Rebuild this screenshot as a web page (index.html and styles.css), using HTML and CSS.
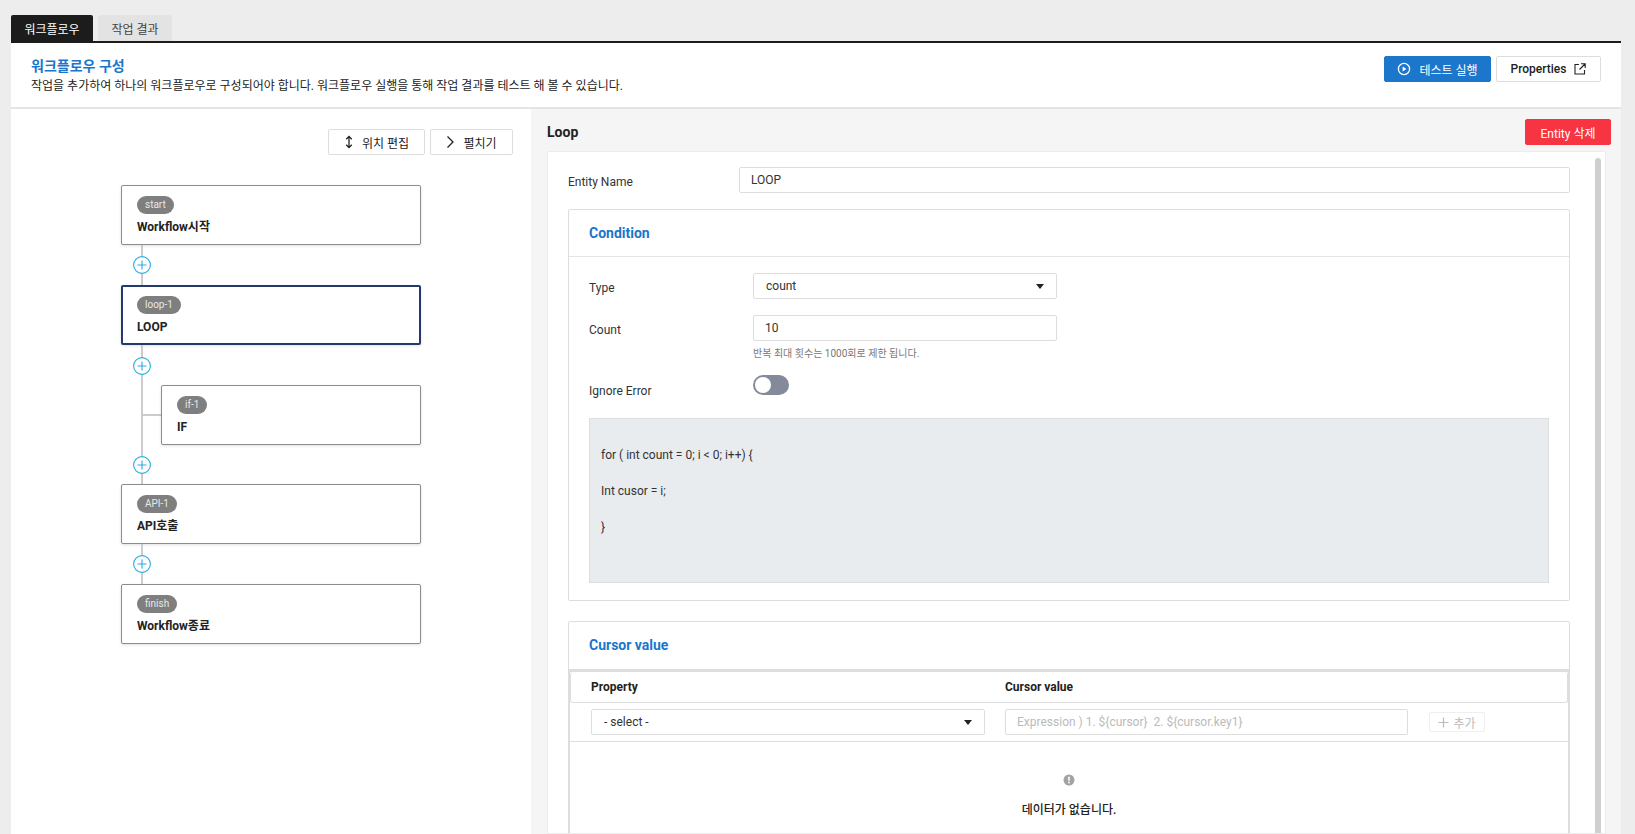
FILE: index.html
```html
<!DOCTYPE html>
<html lang="ko">
<head>
<meta charset="utf-8">
<title>워크플로우</title>
<link rel="stylesheet" href="styles.css">
</head>
<body>
<div class="page">
  <nav class="tabs">
    <div class="tab tab-active">워크플로우</div>
    <div class="tab">작업 결과</div>
  </nav>
  <main class="panel">
    <header class="panel-head">
      <div class="head-text">
        <h1 class="head-title">워크플로우 구성</h1>
        <p class="head-desc">작업을 추가하여 하나의 워크플로우로 구성되어야 합니다. 워크플로우 실행을 통해 작업 결과를 테스트 해 볼 수 있습니다.</p>
      </div>
      <div class="head-actions">
        <button class="btn btn-primary">
          <svg class="icon" width="14" height="14" viewBox="0 0 14 14"><circle cx="7" cy="7" r="5.6" fill="none" stroke="#fff" stroke-width="1.3"/><path d="M5.6 4.6 9.4 7 5.6 9.4Z" fill="#fff"/></svg>
          <span>테스트 실행</span>
        </button>
        <button class="btn btn-props">
          <span>Properties</span>
          <svg class="icon" width="12" height="12" viewBox="0 0 12 12"><path d="M5 1.5H1V11H10.5V7M7 .8H11.2V5M11 1 5.5 6.5" fill="none" stroke="#222" stroke-width="1.1"/></svg>
        </button>
      </div>
    </header>
    <div class="split">
      <section class="left">
        <div class="left-tools">
          <button class="btn btn-tool btn-edit">
            <svg class="icon" width="10" height="14" viewBox="0 0 10 14"><path d="M5 1.5V12.5M2.2 4.2 5 1.4 7.800 4.200M2.200 9.800 5 12.600 7.800 9.800" fill="none" stroke="#222" stroke-width="1.300"/></svg>
            <span>위치 편집</span>
          </button>
          <button class="btn btn-tool btn-open">
            <svg class="icon" width="9" height="14" viewBox="0 0 9 14"><path d="M1.500 1.500 7 7 1.500 12.500" fill="none" stroke="#222" stroke-width="1.300"/></svg>
            <span>펼치기</span>
          </button>
        </div>
        <div class="flow">
          <div class="node"><span class="badge">start</span><strong class="node-name">Workflow시작</strong></div>
          <div class="connector"><svg class="plus" width="18" height="18" viewBox="0 0 18 18"><circle cx="9" cy="9" r="8.400" fill="#fff" stroke="#29abe2" stroke-width="1.100"/><path d="M9 4.500V13.500M4.500 9H13.500" stroke="#29abe2" stroke-width="1.100"/></svg></div>
          <div class="node node-selected"><span class="badge">loop-1</span><strong class="node-name">LOOP</strong></div>
          <div class="connector connector-low"><svg class="plus" width="18" height="18" viewBox="0 0 18 18"><circle cx="9" cy="9" r="8.400" fill="#fff" stroke="#29abe2" stroke-width="1.100"/><path d="M9 4.500V13.500M4.500 9H13.500" stroke="#29abe2" stroke-width="1.100"/></svg></div>
          <div class="branch">
            <div class="node node-child"><span class="badge">if-1</span><strong class="node-name">IF</strong></div>
          </div>
          <div class="connector connector-short"><svg class="plus" width="18" height="18" viewBox="0 0 18 18"><circle cx="9" cy="9" r="8.400" fill="#fff" stroke="#29abe2" stroke-width="1.100"/><path d="M9 4.500V13.500M4.500 9H13.500" stroke="#29abe2" stroke-width="1.100"/></svg></div>
          <div class="node"><span class="badge">API-1</span><strong class="node-name">API호출</strong></div>
          <div class="connector"><svg class="plus" width="18" height="18" viewBox="0 0 18 18"><circle cx="9" cy="9" r="8.400" fill="#fff" stroke="#29abe2" stroke-width="1.100"/><path d="M9 4.500V13.500M4.500 9H13.500" stroke="#29abe2" stroke-width="1.100"/></svg></div>
          <div class="node"><span class="badge">finish</span><strong class="node-name">Workflow종료</strong></div>
        </div>
      </section>
      <section class="right">
        <div class="right-head">
          <h2 class="right-title">Loop</h2>
          <button class="btn btn-danger">Entity 삭제</button>
        </div>
        <div class="card">
          <div class="card-body">
            <div class="entity-row">
              <label class="label entity-label">Entity Name</label>
              <div class="field entity-field">LOOP</div>
            </div>
            <section class="box box-condition">
              <h3 class="box-title">Condition</h3>
              <div class="box-body">
                <div class="row">
                  <label class="label row-label">Type</label>
                  <div class="field field-select field-wide"><span>count</span><i class="caret"></i></div>
                </div>
                <div class="row row-count">
                  <label class="label row-label">Count</label>
                  <div class="field field-wide">10</div>
                </div>
                <p class="help">반복 최대 횟수는 1000회로 제한 됩니다.</p>
                <div class="row row-toggle">
                  <label class="label row-label">Ignore Error</label>
                  <div class="toggle"><i class="knob"></i></div>
                </div>
                <div class="code">
                  <p class="code-line">for ( int count = 0; i &lt; 0; i++) {</p>
                  <p class="code-line">Int cusor = i;</p>
                  <p class="code-line">}</p>
                </div>
              </div>
            </section>
            <section class="box box-cursor">
              <h3 class="box-title">Cursor value</h3>
              <div class="table">
                <div class="table-head">
                  <span class="th th-prop">Property</span>
                  <span class="th">Cursor value</span>
                </div>
                <div class="table-row">
                  <div class="field field-select cell-select"><span>- select -</span><i class="caret"></i></div>
                  <div class="field cell-input">Expression ) 1. ${cursor}&nbsp; 2. ${cursor.key1}</div>
                  <button class="btn-add">
                    <svg width="11" height="11" viewBox="0 0 11 11"><path d="M5.500 .5V10.500M.5 5.500H10.500" stroke="#bbb" stroke-width="1.200"/></svg>
                    <span>추가</span>
                  </button>
                </div>
                <div class="empty">
                  <svg width="12" height="12" viewBox="0 0 12 12"><circle cx="6" cy="6" r="5.500" fill="#a3a3a3"/><rect x="5.200" y="2.600" width="1.600" height="4.200" rx=".6" fill="#fff"/><circle cx="6" cy="8.500" r=".9" fill="#fff"/></svg>
                  <p class="empty-text">데이터가 없습니다.</p>
                </div>
              </div>
            </section>
          </div>
          <div class="scrollbar"></div>
        </div>
      </section>
    </div>
  </main>
</div>
</body>
</html>
```
FILE: styles.css
```css
* { box-sizing: border-box; }
html, body { margin: 0; height: 100%; overflow: hidden; }
body {
  background: #ededed;
  font-family: Roboto, "Noto Sans CJK KR", sans-serif;
  font-size: 12px;
  color: #222;
}
h1, h2, h3, p { margin: 0; }
.page { height: 834px; display: flex; flex-direction: column; padding: 15px 14px 0 11px; }

.tabs { display: flex; gap: 5px; height: 26px; }
.tab {
  width: 74px; height: 26px; display: flex; align-items: center; justify-content: center;
  background: #e3e3e3; color: #444; font-size: 12px; border-radius: 2px 2px 0 0;
}
.tab-active { width: 82px; background: #1c1c1c; color: #fff; }

.panel { flex: 1; min-height: 0; display: flex; flex-direction: column; background: #fff; border-top: 2px solid #1c1c1c; }
.panel-head {
  height: 66px; flex: none; display: flex; justify-content: space-between;
  padding: 13px 20px 0 20px; border-bottom: 2px solid #e4e4e4;
}
.head-title { font-size: 14px; font-weight: 700; color: #1976cc; line-height: 20px; }
.head-desc { font-size: 12px; line-height: 20px; color: #222; }
.head-actions { display: flex; gap: 5px; }

.btn {
  height: 26px; display: inline-flex; align-items: center; justify-content: center; gap: 8px;
  border-radius: 2px; font: inherit; font-size: 12px; padding: 0; cursor: pointer;
}
.btn-primary { width: 107px; background: #1c76cc; border: 1px solid #1c76cc; color: #fff; }
.btn-props { width: 105px; background: #fff; border: 1px solid #ddd; color: #222; font-weight: 500; }
.btn-tool { background: #fff; border: 1px solid #ddd; color: #222; }
.btn-edit { width: 97px; }
.btn-open { width: 83px; }
.btn-danger { width: 86px; background: #f73542; border: 1px solid #f73542; color: #fff; }

.split { flex: 1; min-height: 0; display: flex; }
.left { width: 520px; flex: none; background: #fff; padding: 20px 0 0 110px; }
.left-tools { display: flex; justify-content: flex-end; gap: 5px; width: 402px; margin-left: -10px; padding-left: 0; height: 26px; margin-bottom: 30px; }

.flow { width: 300px; display: flex; flex-direction: column; }
.node {
  height: 60px; width: 300px; flex: none; background: #fff; border: 1px solid #8c8c8c; border-radius: 2px;
  padding: 10px 15px 0; display: flex; flex-direction: column; align-items: flex-start;
  box-shadow: 0 1px 3px rgba(0,0,0,.12);
}
.node-selected { border: 2px solid #25396b; padding: 9px 14px 0; }
.node-child { width: 260px; padding-left: 15px; }
.badge {
  height: 18px; line-height: 18px; padding: 0 8px; border-radius: 9px;
  background: #7f7f7f; color: #e8e8e8; font-size: 10px;
}
.node-name { font-size: 12px; font-weight: 700; line-height: 16px; margin-top: 5px; color: #222; }

.connector {
  height: 40px; width: 42px; flex: none; display: flex; align-items: center; justify-content: center;
  background: linear-gradient(#ccc, #ccc) center / 2px 100% no-repeat;
}
.connector-low { padding-top: 2px; }
.connector-short { height: 39px; }
.plus { display: block; }
.branch {
  height: 60px; flex: none; padding-left: 40px;
  background:
    linear-gradient(#ccc, #ccc) 20px 0 / 2px 100% no-repeat,
    linear-gradient(#ccc, #ccc) 20px 29px / 20px 2px no-repeat;
}

.right { flex: 1; min-width: 0; background: #f5f5f5; padding: 0 10px 0 16px; display: flex; flex-direction: column; }
.right-head { height: 42px; flex: none; display: flex; justify-content: space-between; align-items: flex-start; padding-top: 10px; }
.right-title { font-size: 14px; font-weight: 700; line-height: 26px; }
.card { flex: 1; min-height: 0; width: 1059px; margin-left: 0; overflow: hidden; display: flex; background: #fff; border: 1px solid #ececec; padding: 15px 0 0 20px; }
.card-body { width: 1002px; flex: none; }
.scrollbar { width: 6px; margin: -9px 0 0 25px; background: #cfcfcf; border-radius: 3px 3px 0 0; }

.label { font-size: 12px; color: #333; }
.entity-row { display: flex; align-items: flex-start; margin-bottom: 16px; }
.entity-label { width: 171px; padding-top: 7px; line-height: 16px; }
.field {
  height: 26px; background: #fff; border: 1px solid #ddd; border-radius: 2px; color: #333;
  font-size: 12px; display: flex; align-items: center; padding: 0 11px;
}
.entity-field { flex: 1; }
.field-select { justify-content: space-between; padding: 0 12px; }
.field-wide { width: 304px; }
.caret { width: 0; height: 0; border-left: 4px solid transparent; border-right: 4px solid transparent; border-top: 5px solid #222; }

.box { border: 1px solid #ddd; border-radius: 2px; background: #fff; }
.box-title { font-size: 14px; font-weight: 700; color: #1976cc; height: 47px; line-height: 46px; padding-left: 20px; }
.box-condition { height: 392px; }
.box-condition .box-title { border-bottom: 1px solid #e4e4e4; }
.box-cursor { margin-top: 20px; }
.box-body { padding: 16px 20px 0; }
.row { display: flex; }
.row-label { width: 164px; line-height: 16px; padding-top: 7px; }
.row-count { margin-top: 16px; }
.help { font-size: 10px; color: #777; line-height: 14px; margin: 6px 0 0 164px; }
.row-toggle { margin-top: 14px; height: 20px; }
.row-toggle .row-label { padding-top: 8px; }
.toggle { width: 36px; height: 20px; border-radius: 10px; background: #848a99; padding: 2px; }
.knob { display: block; width: 16px; height: 16px; border-radius: 50%; background: #fff; }
.code { margin-top: 23px; height: 165px; width: 960px; background: #e9ecef; border: 1px solid #ddd; padding: 27px 11px 0; }
.code-line { line-height: 18px; height: 36px; font-size: 12px; color: #333; }

.table { border: 1px solid #ddd; border-top-width: 3px; margin-top: 0; }
.table-head { display: flex; height: 31px; align-items: center; border: 1px solid #ddd; border-top: 0; border-bottom: 1px solid #ddd; padding-left: 20px; border-radius: 3px; }
.th { font-size: 12px; font-weight: 700; color: #222; }
.th-prop { width: 414px; }
.table-row { height: 39px; display: flex; align-items: center; padding-left: 21px; border-bottom: 1px solid #ddd; }
.cell-select { width: 394px; }
.cell-input { width: 403px; margin-left: 20px; color: #bbb; }
.btn-add {
  margin-left: 21px; width: 56px; height: 20px; display: inline-flex; align-items: center; justify-content: center; gap: 4px;
  background: #fff; border: 1px solid #efefef; border-radius: 2px; color: #bbb; font: inherit; font-size: 12px; padding: 0;
}
.empty { height: 200px; display: flex; flex-direction: column; align-items: center; padding-top: 32px; }
.empty-text { font-size: 12px; font-weight: 500; color: #222; margin-top: 15px; line-height: 18px; }
```
